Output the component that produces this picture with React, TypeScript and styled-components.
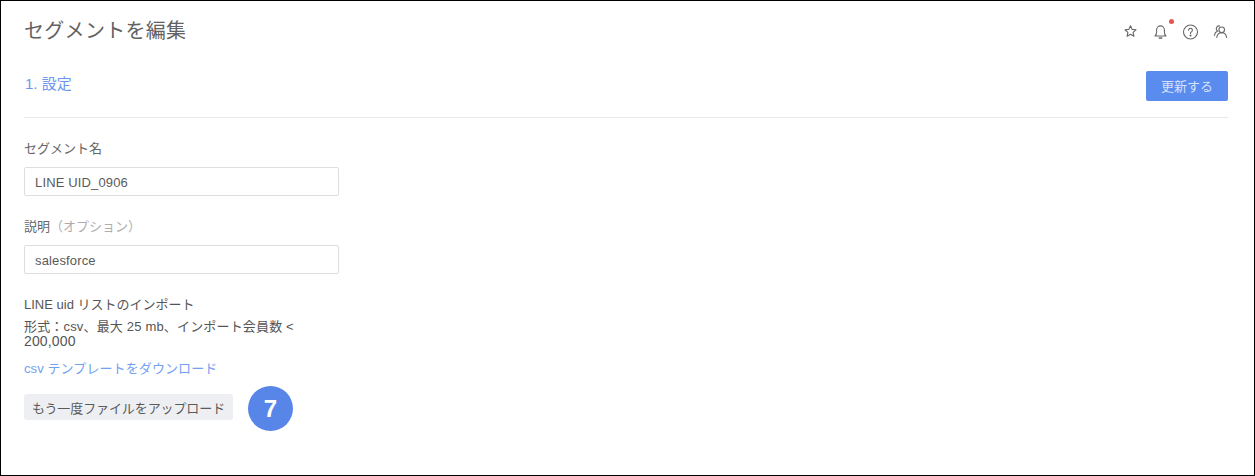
import React from 'react';
import styled, { createGlobalStyle } from 'styled-components';

const GlobalStyle = createGlobalStyle`
  html, body {
    margin: 0;
    padding: 0;
    background: #fff;
  }
  body {
    font-family: "Liberation Sans", "Noto Sans CJK JP", sans-serif;
    color: #555;
  }
`;

const Frame = styled.div`
  box-sizing: border-box;
  width: 1255px;
  height: 476px;
  border: 1px solid #000;
  padding: 0 26px 0 23px;
  overflow: hidden;
`;

const Header = styled.header`
  display: flex;
  align-items: center;
  justify-content: space-between;
  height: 58px;
`;

const Title = styled.h1`
  margin: 2px 0 0;
  font-size: 20px;
  line-height: 56px;
  font-weight: 400;
  letter-spacing: 0.3px;
  color: #626262;
`;

const IconBar = styled.div`
  display: flex;
  align-items: center;
  gap: 13px;
  margin-top: 3px;
  margin-right: -1px;
`;

const IconSlot = styled.span`
  position: relative;
  display: block;
  width: 17px;
  height: 17px;
  color: #666;
  svg {
    display: block;
  }
`;

const NotifyDot = styled.span`
  position: absolute;
  top: -4px;
  right: -5px;
  width: 5px;
  height: 5px;
  border-radius: 50%;
  background: #e5554f;
`;

const StepRow = styled.div`
  display: flex;
  align-items: center;
  justify-content: space-between;
  height: 58px;
  border-bottom: 1px solid #e8e8e8;
`;

const StepName = styled.span`
  font-size: 15px;
  margin-left: 1px;
  margin-top: -11px;
  color: #6c97ee;
`;

const PrimaryButton = styled.button`
  width: 82px;
  height: 30px;
  margin-top: -4px;
  border: 0;
  border-radius: 2px;
  background: #5a8bef;
  color: #d5e1fa;
  font: inherit;
  font-size: 13px;
  padding: 0 0 2px;
`;

const Form = styled.div`
  display: flex;
  flex-direction: column;
  width: 315px;
  padding-top: 22px;
`;

const Field = styled.label`
  display: block;
  margin-bottom: 22px;
`;

const FieldLabel = styled.span`
  display: block;
  font-size: 13px;
  line-height: 18px;
  margin-bottom: 9px;
  color: #666;
`;

const Muted = styled.span`
  color: #adadad;
`;

const TextInput = styled.input`
  display: block;
  box-sizing: border-box;
  width: 100%;
  height: 29px;
  padding: 1px 10px 0;
  border: 1px solid #dedede;
  border-radius: 2px;
  font: inherit;
  font-size: 13px;
  letter-spacing: 0.15px;
  color: #5a5a5a;
  outline: none;
`;

const SectionTitle = styled.div`
  font-size: 13px;
  line-height: 18px;
  color: #555;
`;

const Hint = styled.p`
  margin: 6px 0 0;
  font-size: 13px;
  line-height: 14px;
  letter-spacing: 0.17px;
  color: #555;
`;

const HintNumber = styled.span`
  font-size: 14px;
  letter-spacing: 0.15px;
`;

const TemplateLink = styled.a`
  display: block;
  margin-top: 11px;
  font-size: 13px;
  line-height: 18px;
  letter-spacing: 0.1px;
  color: #74a0f0;
`;

const UploadRow = styled.div`
  display: flex;
  align-items: flex-start;
  gap: 15px;
  margin-top: 8px;
`;

const UploadButton = styled.button`
  width: 209px;
  height: 26px;
  margin-top: 8px;
  padding: 0;
  border: 0;
  border-radius: 3px;
  background: #eeeff2;
  color: #5a5a5a;
  font: inherit;
  font-size: 13px;
  letter-spacing: -0.1px;
`;

const StepBadge = styled.span`
  display: flex;
  align-items: center;
  justify-content: center;
  width: 45px;
  height: 45px;
  border-radius: 50%;
  background: #5885e8;
  color: #fff;
  font-size: 24px;
  font-weight: 700;
`;

const StarIcon = () => (
  <svg width="17" height="17" viewBox="0 0 17 17" fill="none" stroke="currentColor" strokeWidth="1.1" strokeLinejoin="round">
    <path d="M8.5 2.8l1.6 3.6 3.9.4-2.9 2.6.8 3.9-3.4-2-3.4 2 .8-3.9-2.9-2.6 3.9-.4z" />
  </svg>
);

const BellIcon = () => (
  <svg width="17" height="17" viewBox="0 0 17 17" fill="none" stroke="currentColor" strokeWidth="1.1" strokeLinecap="round" strokeLinejoin="round">
    <path d="M3 13h11c-1.2-1-1.6-2-1.6-4V6.8a3.9 3.9 0 0 0-7.8 0V9c0 2-.4 3-1.6 4z" />
    <path d="M7.2 15h2.6" strokeWidth="1.4" />
  </svg>
);

const HelpIcon = () => (
  <svg width="17" height="17" viewBox="0 0 17 17" fill="none" stroke="currentColor" strokeWidth="1.1" strokeLinecap="round">
    <circle cx="8.5" cy="9" r="7" />
    <path d="M6.6 7.2a1.9 1.9 0 1 1 2.9 1.6c-.7.4-1 .8-1 1.6" />
    <circle cx="8.5" cy="12.5" r=".5" fill="currentColor" />
  </svg>
);

const UsersIcon = () => (
  <svg width="17" height="17" viewBox="0 0 17 17" fill="none" stroke="currentColor" strokeWidth="1.1" strokeLinecap="round">
    <circle cx="9.7" cy="6.8" r="2.8" />
    <path d="M4.8 14.5c.3-2.8 2.2-4.8 4.9-4.8s4.6 2 4.9 4.8" />
    <path d="M7.4 2.9a2.8 2.8 0 0 0-3 3.6c.2.7.7 1.2 1.2 1.6-1.7.7-2.9 2.2-3.2 4.2" />
  </svg>
);

export default function App() {
  return (
    <>
      <GlobalStyle />
      <Frame>
        <Header>
          <Title>セグメントを編集</Title>
          <IconBar>
            <IconSlot><StarIcon /></IconSlot>
            <IconSlot><BellIcon /><NotifyDot /></IconSlot>
            <IconSlot><HelpIcon /></IconSlot>
            <IconSlot><UsersIcon /></IconSlot>
          </IconBar>
        </Header>
        <StepRow>
          <StepName>1. 設定</StepName>
          <PrimaryButton>更新する</PrimaryButton>
        </StepRow>
        <Form>
          <Field>
            <FieldLabel>セグメント名</FieldLabel>
            <TextInput defaultValue="LINE UID_0906" />
          </Field>
          <Field>
            <FieldLabel>説明<Muted>（オプション）</Muted></FieldLabel>
            <TextInput defaultValue="salesforce" />
          </Field>
          <SectionTitle>LINE uid リストのインポート</SectionTitle>
          <Hint>形式：csv、最大 25 mb、インポート会員数 &lt; <HintNumber>200,000</HintNumber></Hint>
          <TemplateLink>csv テンプレートをダウンロード</TemplateLink>
          <UploadRow>
            <UploadButton>もう一度ファイルをアップロード</UploadButton>
            <StepBadge>7</StepBadge>
          </UploadRow>
        </Form>
      </Frame>
    </>
  );
}
